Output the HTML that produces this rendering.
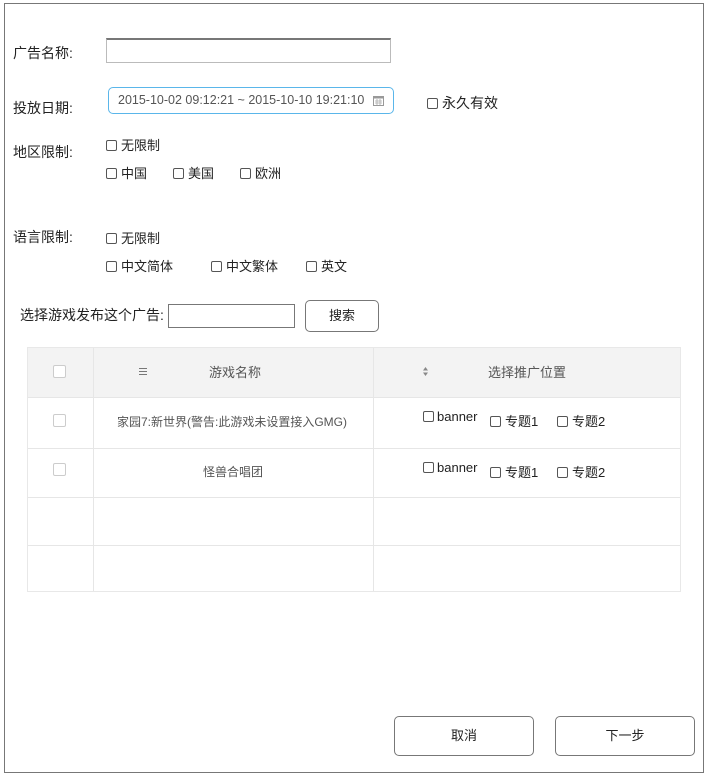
<!DOCTYPE html>
<html><head><meta charset="utf-8"><style>
*{box-sizing:border-box;margin:0;padding:0}
body{width:707px;height:775px;background:#fff;font-family:"Liberation Sans","Noto Sans CJK SC",sans-serif;font-size:13px;color:#333;position:relative;overflow:hidden}
.a{position:absolute;white-space:nowrap}
.frame{position:absolute;left:4px;top:3px;width:700px;height:770px;border:1px solid #777}
.cb{display:inline-block;width:11px;height:11px;border:1px solid #555;border-radius:2px;vertical-align:-1px;margin-right:4px;background:#fff}
.lbl{font-size:13px;color:#222}
.big{font-size:14px;color:#222}
.tb{position:absolute;left:27px;top:347px;width:654px;height:245px;border:1px solid #e8e8e8}
.h{position:absolute;left:0;top:0;width:100%;height:50px;background:#f3f3f3;border-bottom:1px solid #e6e6e6}
.hl{position:absolute;left:0;width:100%;height:1px;background:#e6e6e6}
.vl{position:absolute;top:0;width:1px;height:100%;background:#e6e6e6}
.gcb{position:absolute;width:13px;height:13px;border:1px solid #ccc;border-radius:2px;background:#fff}
.btn{position:absolute;border:1px solid #777;border-radius:5px;text-align:center;color:#222;background:#fff}
</style></head><body>
<div class="frame"></div>
<div class="a big" style="left:13px;top:43px">广告名称:</div>
<div class="a" style="left:106px;top:38px;width:285px;height:25px;border:1px solid #bbb;border-top:2px solid #777"></div>
<div class="a big" style="left:13px;top:98px">投放日期:</div>
<div class="a" style="left:108px;top:87px;width:286px;height:27px;border:1px solid #5ab6ea;border-radius:5px;font-size:12.5px;color:#555;padding:5px 0 0 9px">2015-10-02 09:12:21 ~ 2015-10-10 19:21:10</div>
<svg class="a" style="left:373px;top:95px" width="11" height="11" viewBox="0 0 11 11"><rect x="0.5" y="1.5" width="10" height="9" fill="none" stroke="#999"/><rect x="0.5" y="1.5" width="10" height="2" fill="#999"/><path d="M2 6h7M2 8h7M4 4v6M7 4v6" stroke="#aaa" stroke-width="0.8"/></svg>
<div class="a big" style="left:427px;top:93px"><span class="cb"></span>永久有效</div>
<div class="a big" style="left:13px;top:142px">地区限制:</div>
<div class="a lbl" style="left:106px;top:135px"><span class="cb"></span>无限制</div>
<div class="a lbl" style="left:106px;top:163px"><span class="cb"></span>中国</div>
<div class="a lbl" style="left:173px;top:163px"><span class="cb"></span>美国</div>
<div class="a lbl" style="left:240px;top:163px"><span class="cb"></span>欧洲</div>
<div class="a big" style="left:13px;top:227px">语言限制:</div>
<div class="a lbl" style="left:106px;top:228px"><span class="cb"></span>无限制</div>
<div class="a lbl" style="left:106px;top:256px"><span class="cb"></span>中文简体</div>
<div class="a lbl" style="left:211px;top:256px"><span class="cb"></span>中文繁体</div>
<div class="a lbl" style="left:306px;top:256px"><span class="cb"></span>英文</div>
<div class="a big" style="left:20px;top:305px">选择游戏发布这个广告:</div>
<div class="a" style="left:168px;top:304px;width:127px;height:24px;border:1px solid #777"></div>
<div class="btn" style="left:305px;top:300px;width:74px;height:32px;line-height:30px">搜索</div>
<div class="tb">
<div class="h"></div>
<div class="hl" style="top:100px"></div><div class="hl" style="top:149px"></div><div class="hl" style="top:197px"></div>
<div class="vl" style="left:65px"></div><div class="vl" style="left:345px"></div>
<div class="gcb" style="left:25px;top:17px"></div>
<div class="gcb" style="left:25px;top:66px"></div>
<div class="gcb" style="left:25px;top:115px"></div>
<svg class="a" style="left:111px;top:20px" width="8" height="7"><path d="M0 .5h8M0 3.5h8M0 6.5h8" stroke="#777"/></svg>
<div class="a" style="left:181px;top:14px;color:#555;font-size:13px">游戏名称</div>
<svg class="a" style="left:395px;top:19px" width="5" height="9"><path d="M0 3.5L2.5 0 5 3.5zM0 5.5L2.5 9 5 5.5z" fill="#888"/></svg>
<div class="a" style="left:460px;top:14px;color:#555;font-size:13px">选择推广位置</div>
<div class="a" style="left:89px;top:65px;color:#555;font-size:12px">家园7:新世界(警告:此游戏未设置接入GMG)</div>
<div class="a" style="left:175px;top:115px;color:#555;font-size:12px">怪兽合唱团</div>
<div class="a lbl" style="left:395px;top:61px"><span class="cb" style="margin-right:3px"></span>banner</div>
<div class="a lbl" style="left:462px;top:63px"><span class="cb"></span>专题1</div>
<div class="a lbl" style="left:529px;top:63px"><span class="cb"></span>专题2</div>
<div class="a lbl" style="left:395px;top:112px"><span class="cb" style="margin-right:3px"></span>banner</div>
<div class="a lbl" style="left:462px;top:114px"><span class="cb"></span>专题1</div>
<div class="a lbl" style="left:529px;top:114px"><span class="cb"></span>专题2</div>
</div>
<div class="btn" style="left:394px;top:716px;width:140px;height:40px;line-height:38px">取消</div>
<div class="btn" style="left:555px;top:716px;width:140px;height:40px;line-height:38px">下一步</div>
</body></html>
